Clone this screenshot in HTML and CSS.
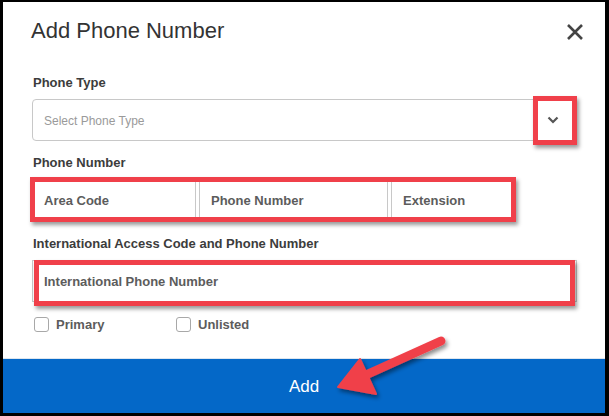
FILE: index.html
```html
<!DOCTYPE html>
<html>
<head>
<meta charset="utf-8">
<link rel="stylesheet" href="styles.css">
</head>
<body>
<div class="frame">
  <div class="dialog">
    <div class="header">
      <h1 class="title">Add Phone Number</h1>
      <svg class="close" width="20" height="20" viewBox="0 0 20 20"><path d="M3 3 L17 17 M17 3 L3 17" stroke="#444" stroke-width="2.6" stroke-linecap="butt"/></svg>
    </div>
    <div class="body">
      <div class="label">Phone Type</div>
      <div class="select">
        <span class="placeholder">Select Phone Type</span>
        <svg class="chev" width="12" height="8" viewBox="0 0 12 8"><path d="M1.5 1.5 L6 6 L10.5 1.5" fill="none" stroke="#555" stroke-width="2.2"/></svg>
        <div class="hl hl-chev"></div>
      </div>
      <div class="label gap-top">Phone Number</div>
      <div class="row">
        <div class="field f-area">Area Code</div>
        <div class="field f-phone">Phone Number</div>
        <div class="field f-ext">Extension</div>
        <div class="hl hl-row"></div>
      </div>
      <div class="label gap-top2">International Access Code and Phone Number</div>
      <div class="intl">
        <div class="field f-intl">International Phone Number</div>
        <div class="hl hl-intl"></div>
      </div>
      <div class="checks">
        <label class="check"><span class="box"></span>Primary</label>
        <label class="check unlisted"><span class="box"></span>Unlisted</label>
      </div>
    </div>
    <div class="footer">Add</div>
  </div>
  <svg class="arrow" width="609" height="416" viewBox="0 0 609 416">
    <defs>
      <filter id="sh" x="-20%" y="-20%" width="140%" height="140%">
        <feDropShadow dx="2" dy="3" stdDeviation="2" flood-color="#000" flood-opacity="0.45"/>
      </filter>
    </defs>
    <g filter="url(#sh)">
      <path d="M441 341 L368 374" stroke="#f0404a" stroke-width="9" stroke-linecap="round"/>
      <path d="M338 387 L360 359 L376 394 Z" fill="#f0404a" stroke="#f0404a" stroke-width="2" stroke-linejoin="round"/>
    </g>
  </svg>
</div>
</body>
</html>
```
FILE: styles.css
```css
* { box-sizing: border-box; }
html, body { margin: 0; padding: 0; background: #000; }
body { font-family: "Liberation Sans", Arial, sans-serif; }
.frame {
  position: relative;
  width: 609px;
  height: 416px;
  padding: 2px 4px 3px 3px;
  background: #000;
}
.dialog {
  background: #fff;
  height: 411px;
  display: flex;
  flex-direction: column;
}
.header {
  display: flex;
  align-items: center;
  justify-content: space-between;
  padding: 16px 20px 0 28px;
  height: 42px;
}
.title {
  margin: 0;
  font-size: 22px;
  line-height: 26px;
  font-weight: normal;
  color: #333;
}
.close { margin-top: 2px; }
.body {
  padding: 31px 28px 0 29px;
}
.label {
  font-size: 13px;
  line-height: 16px;
  font-weight: bold;
  color: #3c3c3c;
  padding-left: 1px;
  margin-bottom: 8px;
}
.gap-top { margin-top: 14px; }
.gap-top2 { margin-top: 15px; }
.select {
  position: relative;
  height: 42px;
  border: 1px solid #c8c8c8;
  border-radius: 4px;
  display: flex;
  align-items: center;
  justify-content: space-between;
  padding: 0 17px 0 11px;
}
.placeholder {
  font-size: 12px;
  color: #9a9a9a;
  margin-top: 2px;
}
.hl {
  position: absolute;
  border: 5px solid #f0404a;
  box-shadow: 2px 3px 4px rgba(0,0,0,0.4);
  pointer-events: none;
}
.hl-chev { left: 500px; top: -4px; width: 44px; height: 49px; }
.row {
  position: relative;
  display: flex;
  gap: 3px;
  width: 482px;
  height: 42px;
}
.field {
  height: 42px;
  border: 1px solid #c8c8c8;
  padding-left: 11px;
  display: flex;
  align-items: center;
  font-size: 13px;
  font-weight: bold;
  color: #5c5c5c;
}
.f-area { width: 164px; }
.f-phone { width: 189px; }
.f-ext { width: 123px; }
.hl-row { left: -2px; top: -2px; right: -2px; bottom: -1px; }
.intl { position: relative; }
.f-intl { width: 100%; }
.hl-intl { left: 2px; right: 2px; top: 0; bottom: -4px; }
.checks {
  display: flex;
  margin-top: 14px;
  padding-left: 2px;
  height: 16px;
  align-items: center;
}
.check {
  display: flex;
  align-items: center;
  gap: 7px;
  font-size: 13px;
  font-weight: bold;
  color: #5c5c5c;
  width: 142px;
}
.box {
  width: 15px;
  height: 15px;
  border: 1px solid #a8a8a8;
  border-radius: 3px;
  background: #fff;
}
.footer {
  margin-top: auto;
  height: 55px;
  background: #0468c8;
  border-top: 1px solid #dde6ef;
  color: #fff;
  font-size: 17px;
  display: flex;
  align-items: center;
  justify-content: center;
  padding-top: 2px;
}
.arrow {
  position: absolute;
  left: 0;
  top: 0;
  pointer-events: none;
}
```
